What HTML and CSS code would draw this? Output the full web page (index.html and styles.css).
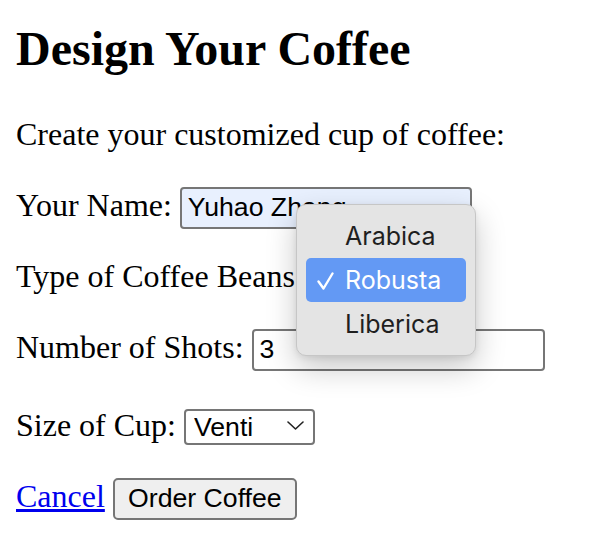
FILE: index.html
```html
<!DOCTYPE html>
<html lang="en">
<head>
<meta charset="utf-8">
<title>Design Your Coffee</title>
<link rel="stylesheet" href="styles.css">
</head>
<body>
<main class="page">
  <h1 class="title">Design Your Coffee</h1>
  <form class="order-form">
    <p class="row intro">Create your customized cup of coffee:</p>
    <p class="row"><label for="name">Your Name:</label> <input class="field field-name" id="name" type="text" value="Yuhao Zhang"></p>
    <p class="row"><label for="beans">Type of Coffee Beans:</label> <span class="select-wrap"><select class="field select select-beans" id="beans"><option>Arabica</option><option selected>Robusta</option><option>Liberica</option></select></span></p>
    <p class="row"><label for="shots">Number of Shots:</label> <input class="field field-shots" id="shots" type="text" value="3"></p>
    <p class="row row-spaced"><label for="size">Size of Cup:</label> <span class="select-wrap"><select class="field select select-size" id="size"><option>Tall</option><option>Grande</option><option selected>Venti</option></select><svg class="chevron" width="17" height="9" viewBox="0 0 17 9"><polyline points="1,1 8.5,8 16,1" fill="none" stroke="#222" stroke-width="1.6" stroke-linecap="round" stroke-linejoin="round"/></svg></span></p>
    <p class="row"><a class="cancel" href="#">Cancel</a> <button class="order" type="button">Order Coffee</button></p>
  </form>
  <ul class="menu">
    <li class="menu-item">Arabica</li>
    <li class="menu-item is-selected"><svg class="check" width="17" height="18" viewBox="0 0 17 18"><polyline points="1.5,9.5 6.5,16.5 15.5,1.5" fill="none" stroke="#fff" stroke-width="2.4" stroke-linecap="round" stroke-linejoin="round"/></svg>Robusta</li>
    <li class="menu-item">Liberica</li>
  </ul>
</main>
</body>
</html>
```

FILE: styles.css
```css
html, body {
  margin: 0;
  background: #fff;
}

body {
  font-family: "Liberation Serif", "Times New Roman", serif;
  font-size: 32px;
  color: #000;
}

.page {
  position: relative;
  padding: 21px 16px 18px;
}

.title {
  margin: 0 0 37px;
  font-size: 48px;
  line-height: 56px;
  font-weight: bold;
}

.order-form {
  margin: 0;
}

.row {
  margin: 29px 0 0;
  height: 42px;
  line-height: 40px;
  white-space: nowrap;
}

.intro {
  margin-top: 0;
}

.row-spaced {
  margin-top: 36px;
}

.field {
  box-sizing: border-box;
  height: 42px;
  margin: 0;
  padding: 0 6px;
  border: 2px solid #767676;
  border-radius: 4px;
  font-family: "Liberation Sans", Arial, sans-serif;
  font-size: 26.67px;
  color: #000;
  background: #fff;
  vertical-align: baseline;
  outline: none;
}

.field-name {
  width: 292px;
  background: #e8f0fe;
}

.field-shots {
  width: 293px;
}

.select-wrap {
  position: relative;
  display: inline-block;
}

.select {
  -webkit-appearance: none;
  appearance: none;
  height: 36px;
  padding: 0 0 0 8px;
}

.select-size {
  width: 131px;
}

.select-beans {
  width: 150px;
}

.chevron {
  position: absolute;
  right: 11px;
  top: 16px;
  pointer-events: none;
}

.cancel {
  color: #0000ee;
  text-decoration: underline;
}

.order {
  box-sizing: border-box;
  width: 184px;
  height: 42px;
  margin: 0;
  padding: 0;
  border: 2px solid #767676;
  border-radius: 5px;
  background: #efefef;
  font-family: "Liberation Sans", Arial, sans-serif;
  font-size: 26.67px;
  color: #000;
  vertical-align: baseline;
}

.menu {
  position: absolute;
  left: 296px;
  top: 204px;
  width: 180px;
  box-sizing: border-box;
  margin: 0;
  padding: 9px;
  list-style: none;
  background: #e4e4e4;
  border: 1px solid #c6c6c6;
  border-radius: 10px;
  box-shadow: 0 12px 30px rgba(0, 0, 0, 0.22), 0 2px 6px rgba(0, 0, 0, 0.08);
  font-family: Inter, "Noto Sans", sans-serif;
  font-size: 25px;
  color: #1f1f1f;
}

.menu-item {
  position: relative;
  height: 44px;
  line-height: 44px;
  padding-left: 39px;
  border-radius: 5px;
}

.menu-item.is-selected {
  background: #6399f4;
  color: #fff;
}

.check {
  position: absolute;
  left: 11px;
  top: 14px;
}
```
